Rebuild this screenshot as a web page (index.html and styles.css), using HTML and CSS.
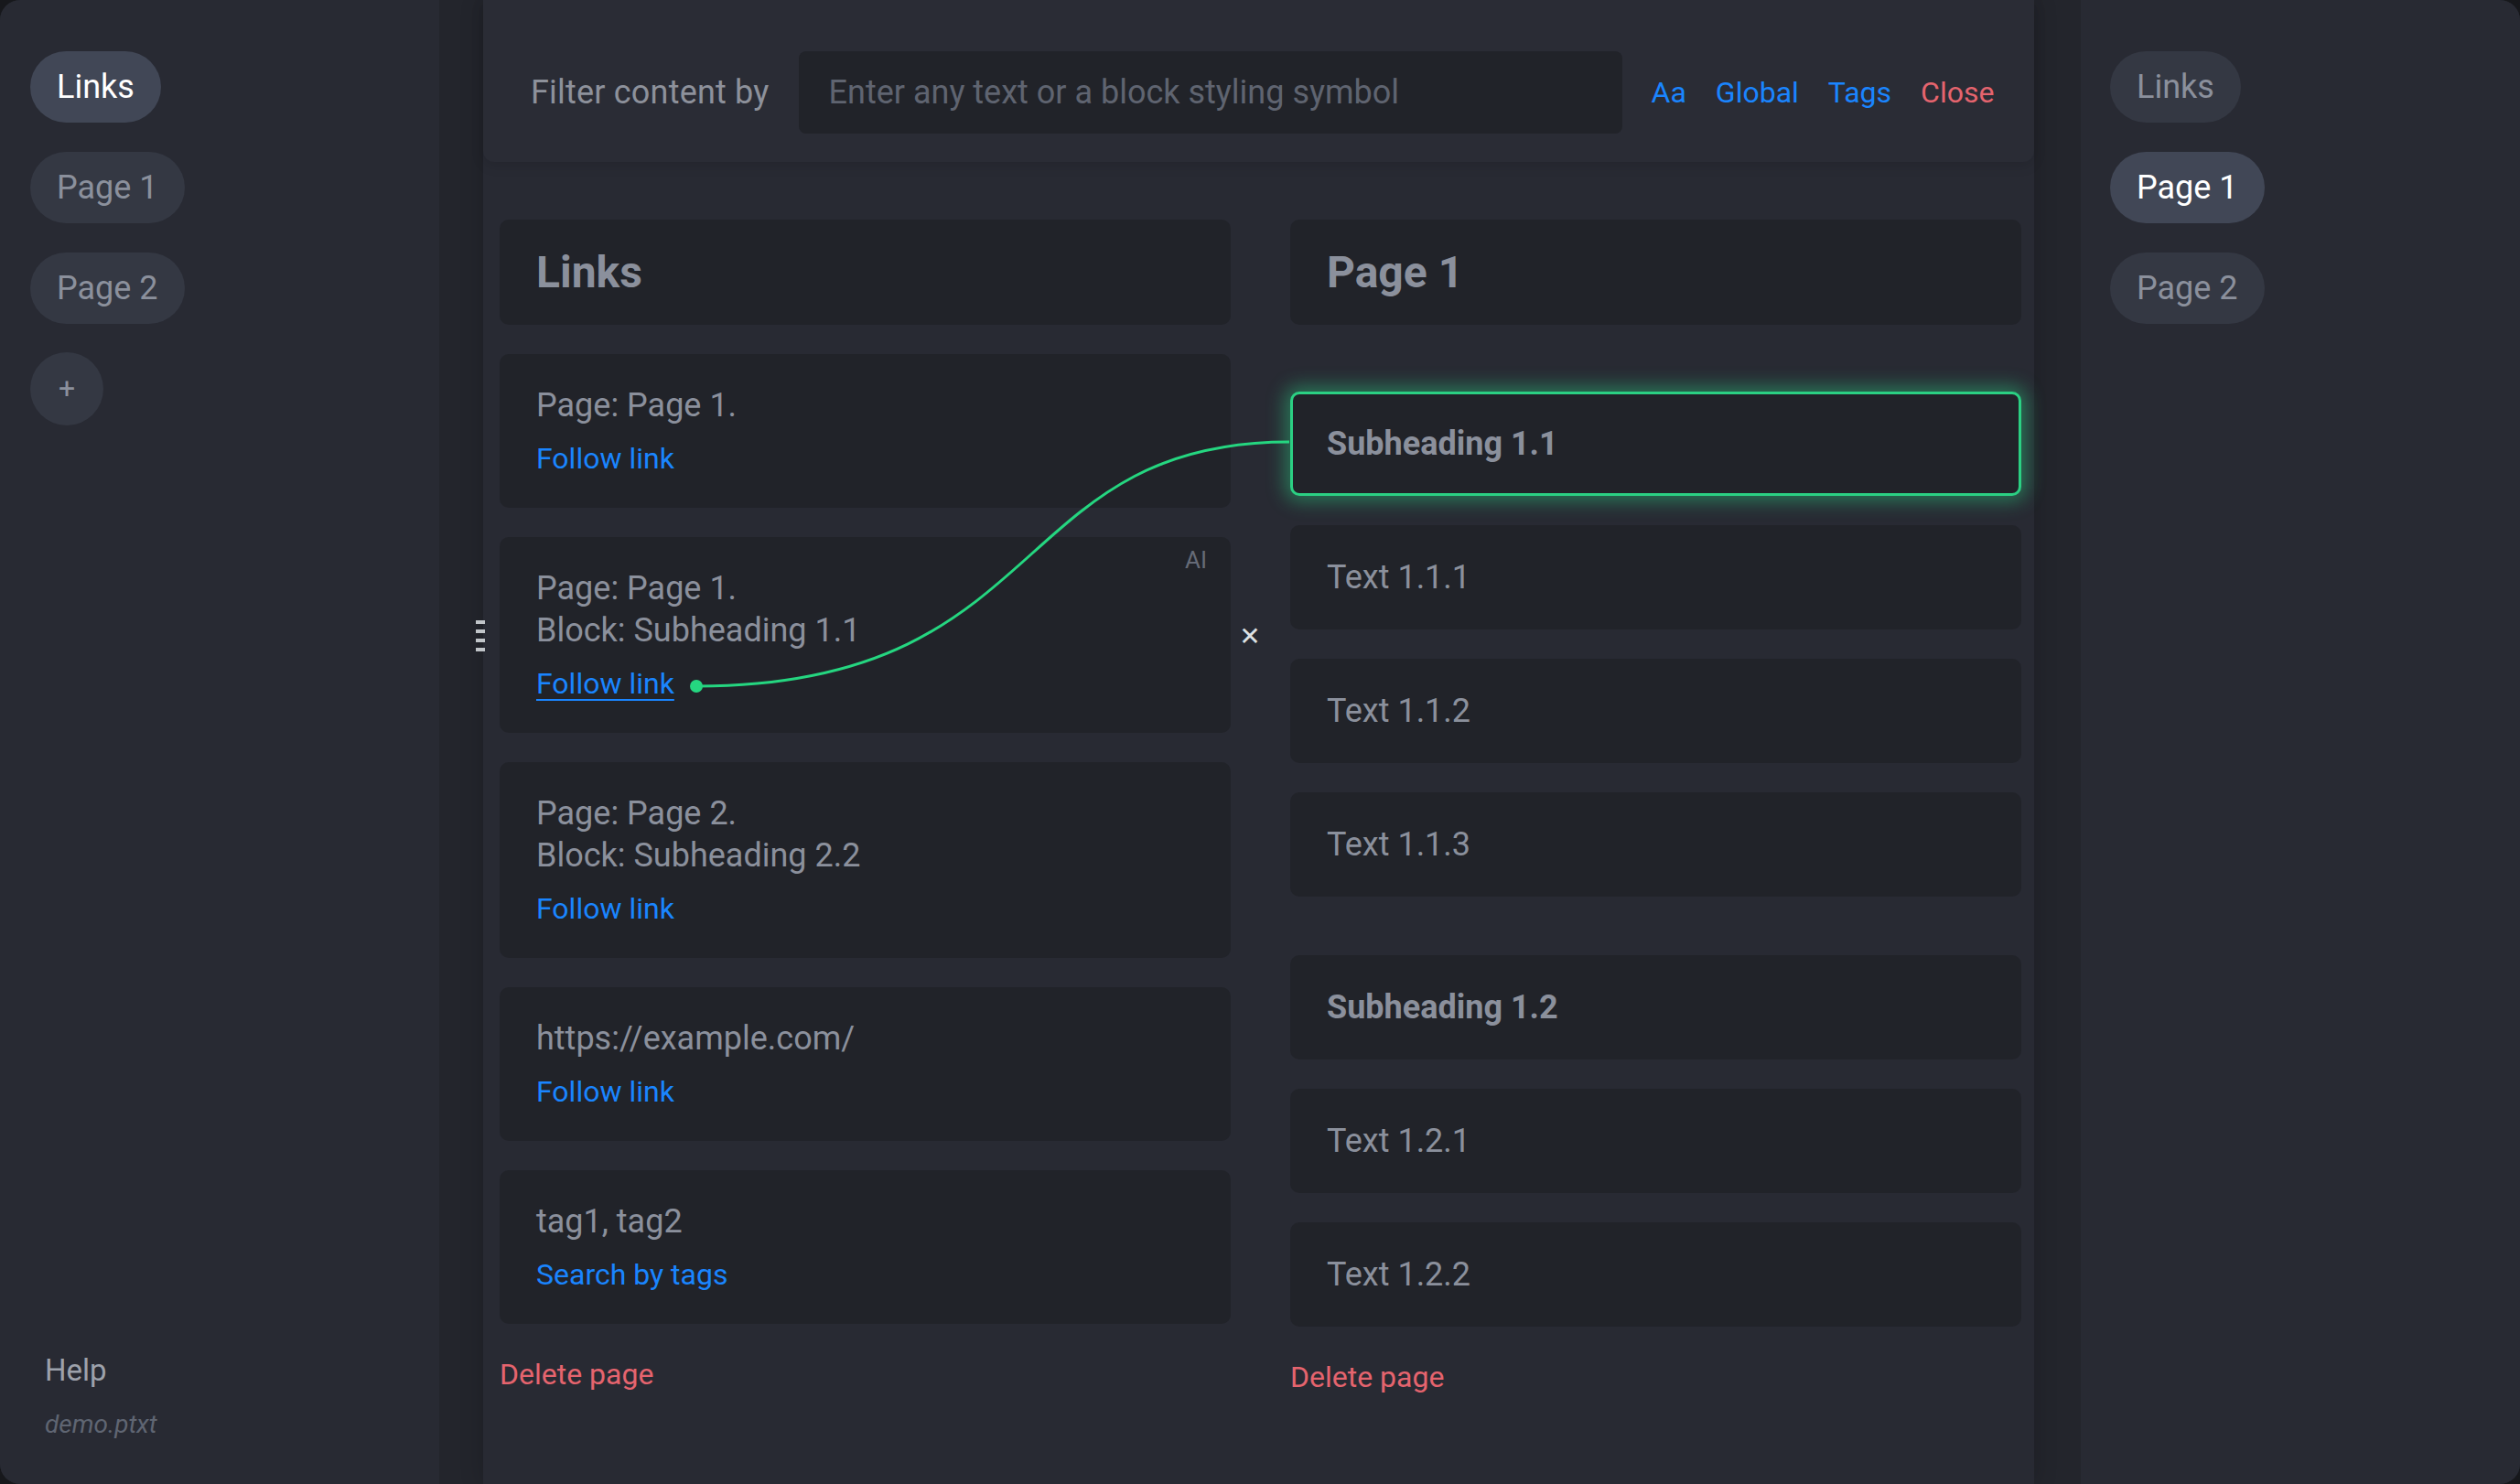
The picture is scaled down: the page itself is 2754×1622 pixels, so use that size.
FILE: index.html
```html
<!DOCTYPE html>
<html lang="en">
<head>
<meta charset="utf-8">
<title>Links</title>
<link rel="stylesheet" href="styles.css">
</head>
<body>
<div class="app">
  <aside class="sidebar left">
    <nav class="pills">
      <a class="pill active">Links</a>
      <a class="pill">Page 1</a>
      <a class="pill">Page 2</a>
      <a class="pill plus">+</a>
    </nav>
    <div class="side-foot">
      <div class="help">Help</div>
      <div class="file">demo.ptxt</div>
    </div>
  </aside>

  <main class="main">
    <div class="center">
      <div class="filter">
        <span class="filter-label">Filter content by</span>
        <input class="filter-input" type="text" placeholder="Enter any text or a block styling symbol">
        <a class="opt blue">Aa</a>
        <a class="opt blue">Global</a>
        <a class="opt blue">Tags</a>
        <a class="opt red">Close</a>
      </div>
      <div class="columns">
        <section class="col">
          <div class="card head">Links</div>
          <div class="card">
            <div>Page: Page 1.</div>
            <a class="link">Follow link</a>
          </div>
          <div class="card hovered">
            <span class="ai">AI</span>
            <div>Page: Page 1.</div>
            <div>Block: Subheading 1.1</div>
            <a class="link under">Follow link</a>
          </div>
          <div class="card">
            <div>Page: Page 2.</div>
            <div>Block: Subheading 2.2</div>
            <a class="link">Follow link</a>
          </div>
          <div class="card">
            <div>https://example.com/</div>
            <a class="link">Follow link</a>
          </div>
          <div class="card">
            <div>tag1, tag2</div>
            <a class="link">Search by tags</a>
          </div>
          <a class="delete">Delete page</a>
        </section>
        <section class="col">
          <div class="card head">Page 1</div>
          <div class="card block sub first glow">Subheading 1.1</div>
          <div class="card block">Text 1.1.1</div>
          <div class="card block">Text 1.1.2</div>
          <div class="card block">Text 1.1.3</div>
          <div class="card block sub">Subheading 1.2</div>
          <div class="card block">Text 1.2.1</div>
          <div class="card block">Text 1.2.2</div>
          <a class="delete">Delete page</a>
        </section>
      </div>
    </div>
  </main>

  <aside class="sidebar right">
    <nav class="pills">
      <a class="pill">Links</a>
      <a class="pill active">Page 1</a>
      <a class="pill">Page 2</a>
    </nav>
  </aside>

  <div class="handle"><i></i><i></i><i></i><i></i></div>
  <div class="remove">&#x2715;</div>
  <svg class="wire" width="2754" height="1622" viewBox="0 0 2754 1622">
    <path d="M761 750 C 1150 750 1100 483 1409 483" fill="none" stroke="#25d680" stroke-width="3"/>
    <circle cx="761" cy="750" r="7" fill="#25d680"/>
  </svg>
</div>
</body>
</html>
```

FILE: styles.css
```css
* { box-sizing: border-box; }
html, body { margin: 0; padding: 0; }
body {
  background: #17181c;
  font-family: "Roboto", "Liberation Sans", sans-serif;
  color: #8b909c;
  width: 2754px;
  height: 1622px;
  overflow: hidden;
}
a { cursor: pointer; }

.app {
  position: relative;
  width: 2754px;
  height: 1622px;
  display: grid;
  grid-template-columns: 480px 1794px 480px;
  border-radius: 22px;
  overflow: hidden;
  background: #23252c;
}

.sidebar {
  background: #282a33;
  display: flex;
  flex-direction: column;
  justify-content: space-between;
  min-width: 0;
}
.sidebar.left { padding: 56px 32px 45px 33px; }
.sidebar.right { padding: 56px 32px 0 32px; }

.pills {
  display: flex;
  flex-direction: column;
  align-items: flex-start;
  gap: 32px;
}
.pill {
  height: 78px;
  line-height: 78px;
  padding: 0 29px;
  border-radius: 39px;
  background: #343843;
  color: #8b909c;
  font-size: 36px;
}
.pill.active { background: #414756; color: #ffffff; }
.pill.plus {
  width: 80px;
  height: 80px;
  padding: 0;
  border-radius: 50%;
  text-align: center;
  line-height: 78px;
  font-size: 32px;
  margin-top: -1px;
}

.side-foot { padding-left: 16px; }
.help { font-size: 33px; color: #9da1ab; line-height: 46px; }
.file { font-size: 28px; font-style: italic; color: #5f6572; line-height: 40px; margin-top: 16px; }

.main {
  padding: 0 51px 0 48px;
  background: #23252c;
  min-width: 0;
}
.center {
  width: 1695px;
  height: 100%;
  background: #282a33;
  box-shadow: 0 0 24px rgba(0,0,0,0.18);
}

.filter {
  height: 177px;
  background: #2a2c35;
  border-radius: 0 0 12px 12px;
  box-shadow: 0 4px 14px rgba(0,0,0,0.12);
  display: flex;
  align-items: center;
  gap: 32px;
  padding: 25px 40px 0 52px;
  font-size: 36px;
}
.filter-label { color: #8d919b; white-space: nowrap; letter-spacing: 0.2px; }
.filter-input {
  width: 900px;
  height: 90px;
  flex: none;
  border: 0;
  outline: 0;
  border-radius: 8px;
  background: #212329;
  padding: 0 33px;
  font-family: inherit;
  font-size: 36px;
  color: #8b909c;
}
.filter-input::placeholder { color: #5f6470; }
.opt { white-space: nowrap; font-size: 32px; }
.blue { color: #1a85ff; }
.red { color: #e5646e; }

.columns {
  display: grid;
  grid-template-columns: 799px 799px;
  column-gap: 65px;
  padding: 63px 14px 0 18px;
}
.col {
  display: flex;
  flex-direction: column;
  gap: 32px;
}

.card {
  position: relative;
  background: #212329;
  border-radius: 10px;
  padding: 33px 40px 31px;
  font-size: 36px;
  line-height: 46px;
  color: #8b909c;
}
.card.head {
  font-size: 48px;
  font-weight: 700;
  line-height: 51px;
  padding: 32px 40px;
}
.card .link {
  display: block;
  margin-top: 12px;
  color: #1a85ff;
  font-size: 32px;
}
.card .link.under {
  display: inline-block;
  text-decoration: underline;
  text-underline-offset: 6px;
  text-decoration-thickness: 2px;
}
.card.block { line-height: 50px; padding: 32px 40px; }
.card.sub { font-weight: 700; }
.card.sub.first { margin-top: 41px; }
.card.sub { margin-top: 32px; }
.card.glow {
  border: 3px solid #2bd083;
  padding: 29px 37px;
  box-shadow: 0 0 20px 6px rgba(43, 208, 131, 0.45);
}

.ai {
  position: absolute;
  top: 10px;
  right: 26px;
  font-size: 26px;
  line-height: 30px;
  color: #666b77;
}

.delete {
  color: #e5646e;
  font-size: 32px;
  line-height: 46px;
}

.handle {
  position: absolute;
  left: 520px;
  top: 678px;
  display: flex;
  flex-direction: column;
  gap: 6px;
}
.handle i {
  display: block;
  width: 10px;
  height: 4px;
  background: #c0c4c8;
}
.remove {
  position: absolute;
  left: 1350px;
  top: 676px;
  width: 32px;
  height: 40px;
  line-height: 40px;
  text-align: center;
  font-size: 28px;
  font-weight: 700;
  color: #dde1e4;
  font-family: "DejaVu Sans", sans-serif;
}
.wire {
  position: absolute;
  left: 0;
  top: 0;
  pointer-events: none;
}
```
